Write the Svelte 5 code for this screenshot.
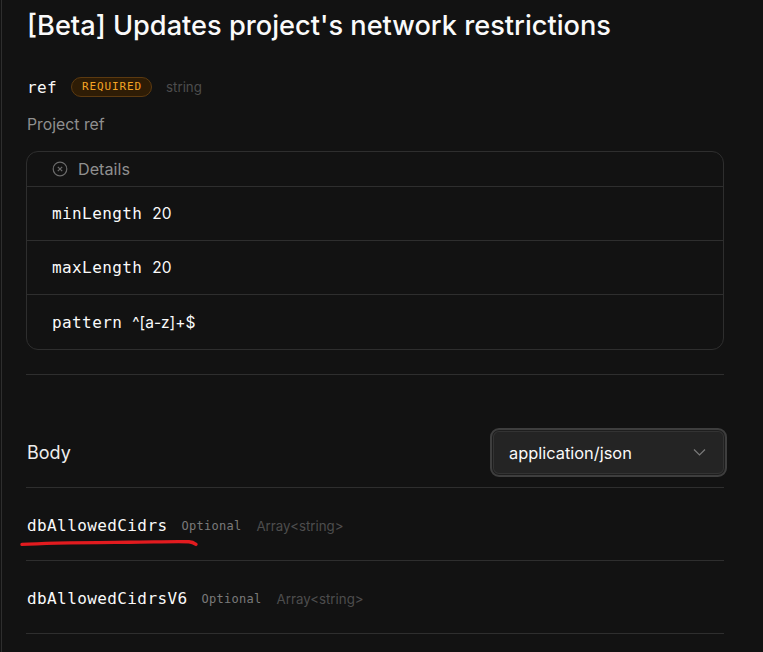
<script lang="ts">
  const details = [
    { label: 'minLength', value: '20' },
    { label: 'maxLength', value: '20' },
    { label: 'pattern', value: '^[a-z]+$' },
  ];
  const fields = [
    { name: 'dbAllowedCidrs', marked: true },
    { name: 'dbAllowedCidrsV6', marked: false },
  ];
</script>

<main class="page">
  <h1>[Beta] Updates project's network restrictions</h1>

  <div class="param">
    <code class="name">ref</code>
    <span class="required">REQUIRED</span>
    <span class="type">string</span>
  </div>
  <p class="desc">Project ref</p>

  <section class="details">
    <div class="details-head">
      <svg width="16" height="16" viewBox="0 0 16 16" fill="none" stroke="#6b6b6b" stroke-width="1.2">
        <circle cx="8" cy="8" r="6.8" />
        <path d="M5.8 5.8l4.4 4.4M10.2 5.8l-4.4 4.4" />
      </svg>
      <span>Details</span>
    </div>
    {#each details as d}
      <div class="detail-row">
        <span class="mono">{d.label}</span>
        <span class="value">{d.value}</span>
      </div>
    {/each}
  </section>

  <hr class="rule" />

  <div class="body-head">
    <h2>Body</h2>
    <button class="select">
      <span>application/json</span>
      <svg width="13" height="13" viewBox="0 0 13 13" fill="none" stroke="#7a7a7a" stroke-width="1.2">
        <path d="M1 3.5L6.5 9L12 3.5" />
      </svg>
    </button>
  </div>

  {#each fields as f}
    <div class="field">
      <code class="name">{f.name}</code>
      <span class="optional">Optional</span>
      <span class="array">Array&lt;string&gt;</span>
      {#if f.marked}
        <svg class="scribble" width="180" height="10" viewBox="0 0 180 10" fill="none">
          <path d="M3 6.4C30 4.8 70 4.6 110 4.2C135 4 160 3.2 170 3.8C173 4 175 5 177 6.4" stroke="#e21b1f" stroke-width="3.4" stroke-linecap="round" />
        </svg>
      {/if}
    </div>
  {/each}
</main>

<style>
  :global(body) {
    background: #121212;
    margin: 0;
  }
  .page {
    height: 652px;
    box-sizing: border-box;
    overflow: hidden;
    padding: 8px 39px 0 24px;
    border-left: 1px solid #2e2e2e;
    margin-left: 1px;
    background: #121212;
    font-family: Inter, "Noto Sans", sans-serif;
  }
  h1 {
    margin: 0 0 0 1px;
    font-size: 27.2px;
    line-height: 36px;
    font-weight: 500;
    color: #fafafa;
    white-space: nowrap;
  }
  .param {
    display: flex;
    align-items: center;
    margin: 32px 0 0 1px;
    height: 22px;
  }
  .name,
  .mono {
    font-family: "DejaVu Sans Mono", monospace;
    font-size: 16px;
    letter-spacing: 0.4px;
    color: #fafafa;
  }
  .required {
    margin-left: 14px;
    height: 18px;
    line-height: 18px;
    padding: 0 9px 0 10px;
    border: 1px solid #5c3a10;
    border-radius: 10px;
    background: #2e1c05;
    color: #f5a524;
    font-family: "DejaVu Sans Mono", monospace;
    font-size: 11px;
    letter-spacing: 0.87px;
  }
  .type {
    margin-left: 14px;
    font-size: 13.3px;
    color: #4d4d4d;
  }
  .desc {
    margin: 16px 0 0 1px;
    font-size: 15.8px;
    line-height: 22px;
    color: #8f8f8f;
  }
  .details {
    margin-top: 15px;
    border: 1px solid #2e2e2e;
    border-radius: 12px;
  }
  .details-head {
    display: flex;
    align-items: center;
    gap: 10px;
    height: 34px;
    padding-left: 25px;
    color: #8f8f8f;
    font-size: 16.2px;
  }
  .detail-row {
    display: flex;
    align-items: center;
    gap: 10px;
    height: 53px;
    padding-left: 25px;
    border-top: 1px solid #2e2e2e;
    color: #fafafa;
  }
  .detail-row:last-child {
    height: 54px;
  }
  .value {
    font-size: 15.5px;
  }
  .rule {
    margin: 24px 0 0;
    border: 0;
    border-top: 1px solid #2e2e2e;
  }
  .body-head {
    display: flex;
    align-items: center;
    justify-content: space-between;
    height: 112px;
    border-bottom: 1px solid #2e2e2e;
  }
  h2 {
    margin: 42px 0 0 1px;
    font-size: 18px;
    font-weight: 400;
    color: #ededed;
  }
  .select {
    margin: 43px -3px 0 0;
    display: flex;
    align-items: center;
    justify-content: space-between;
    width: 237px;
    height: 49px;
    box-sizing: border-box;
    padding: 0 19px 0 17px;
    background: #242424;
    border: 2px solid #3e3e3e;
    border-radius: 9px;
    box-shadow: inset 0 0 0 1px #1e1e1e, inset 0 0 0 2px #333;
    color: #fafafa;
    font-family: inherit;
    font-size: 16.4px;
  }
  .field {
    position: relative;
    display: flex;
    align-items: center;
    box-sizing: border-box;
    height: 73px;
    padding: 3px 0 0 1px;
    border-bottom: 1px solid #2e2e2e;
  }
  .optional {
    margin-left: 14px;
    font-family: "DejaVu Sans Mono", monospace;
    font-size: 12px;
    letter-spacing: 0.27px;
    color: #7a7a7a;
  }
  .array {
    margin-left: 15px;
    font-size: 13.3px;
    color: #4d4d4d;
  }
  .scribble {
    position: absolute;
    left: -7px;
    top: 50px;
  }
</style>
